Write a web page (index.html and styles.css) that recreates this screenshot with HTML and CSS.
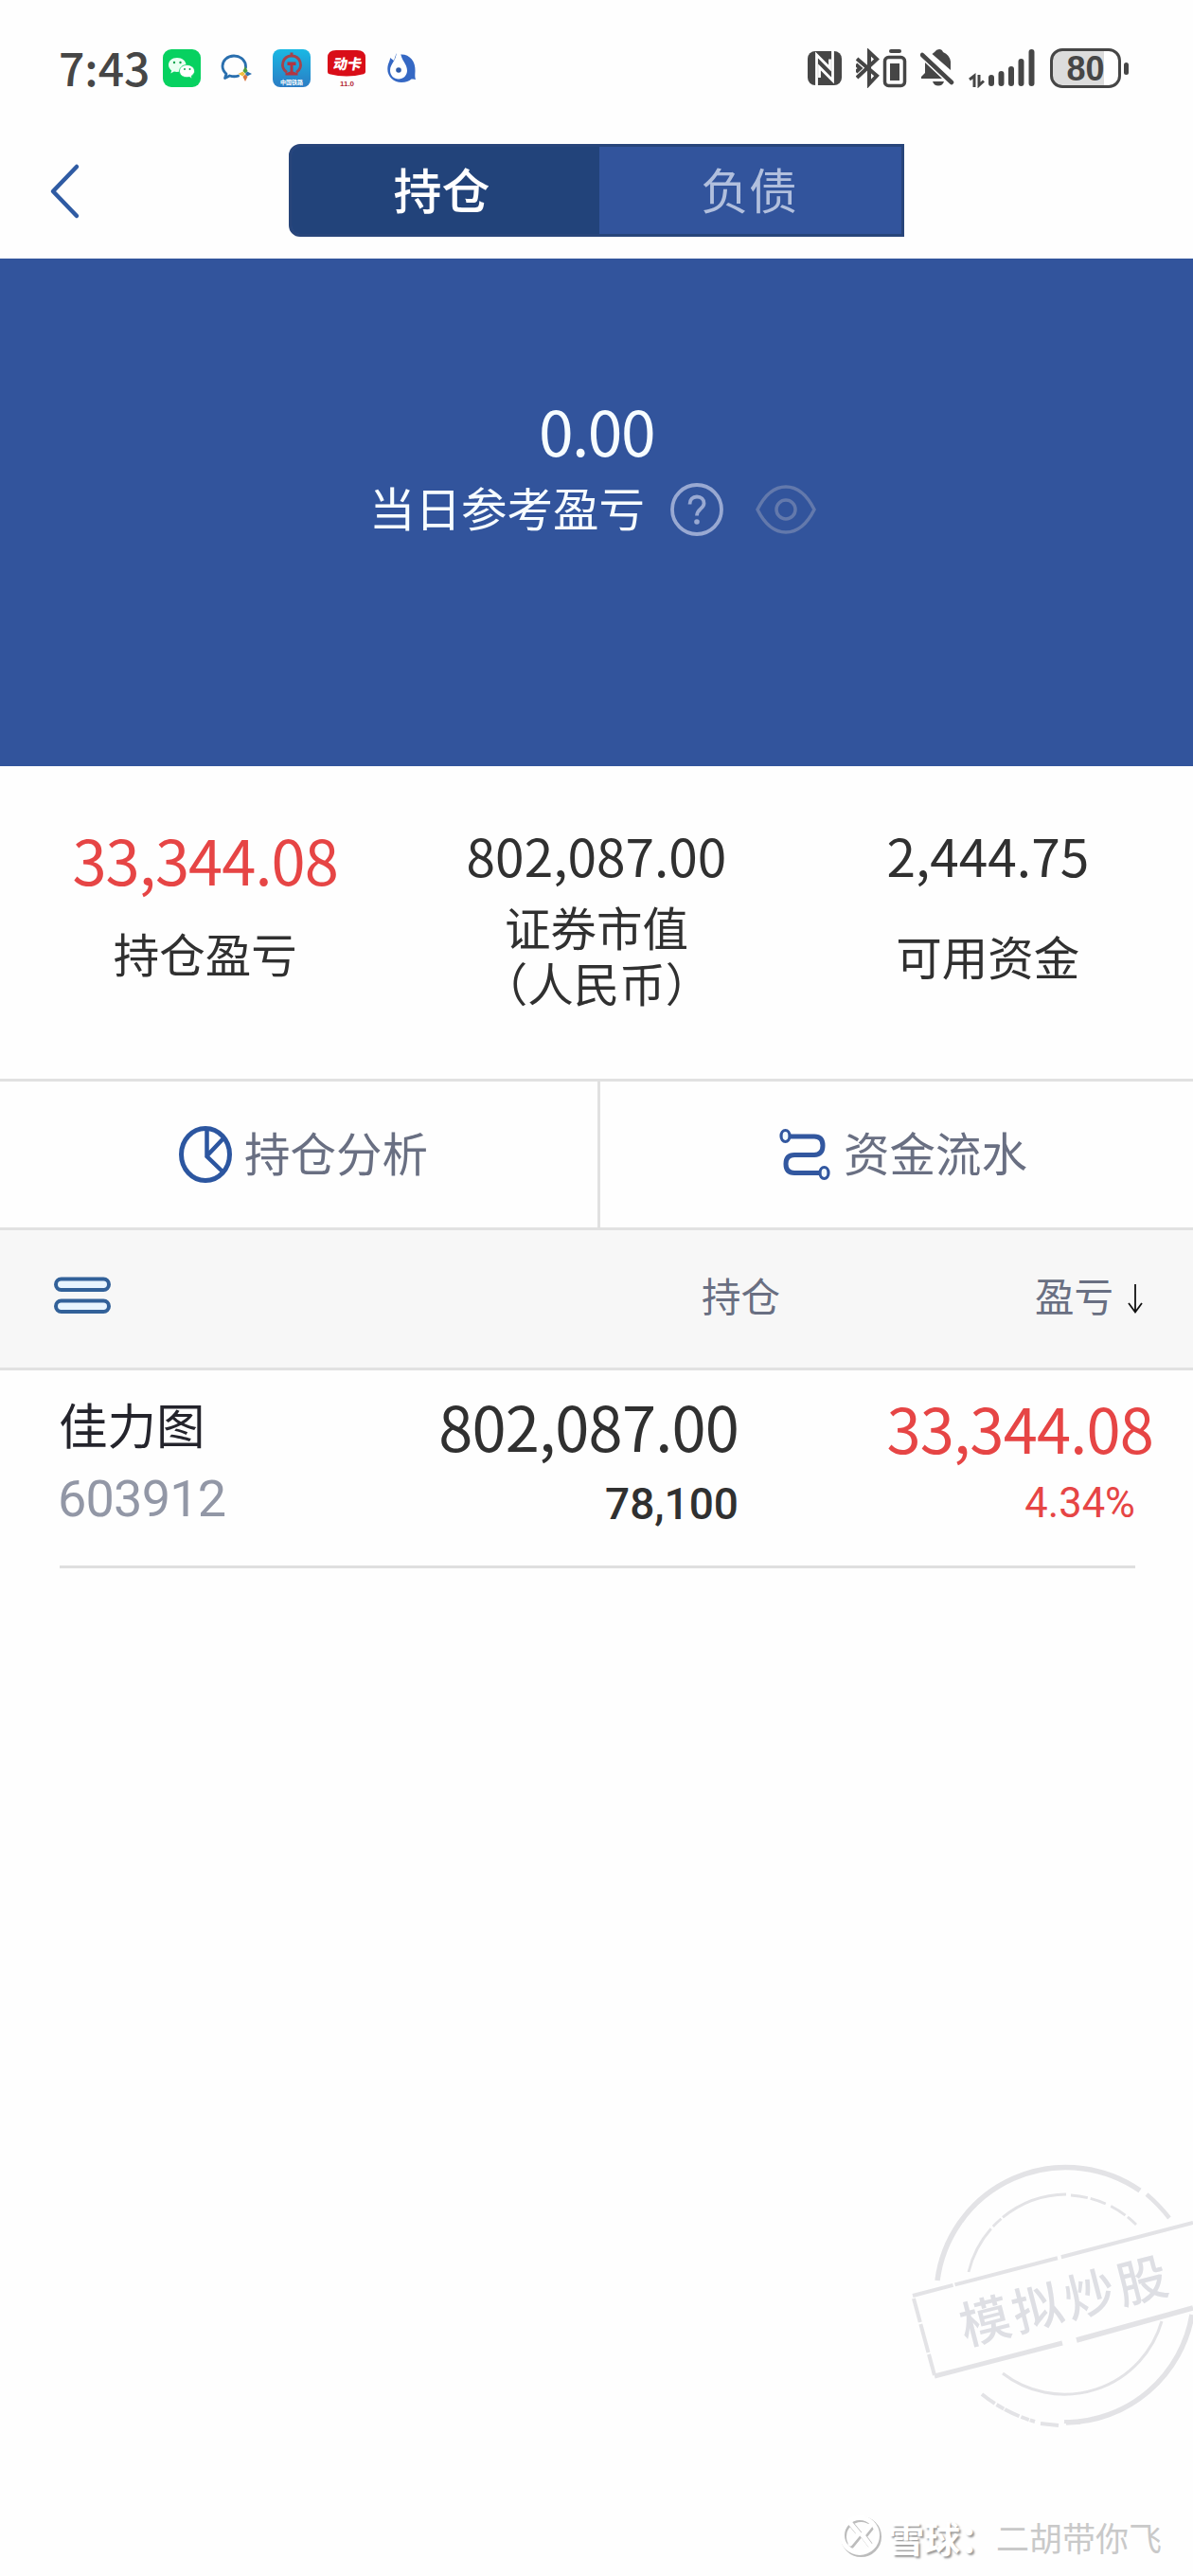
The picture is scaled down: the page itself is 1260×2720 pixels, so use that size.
FILE: index.html
```html
<!DOCTYPE html>
<html lang="zh-CN">
<head>
<meta charset="utf-8">
<title>持仓</title>
<link rel="stylesheet" href="styles.css">
</head>
<body>
<div class="screen">
  <header class="status">
    <div class="status-left">
      <span class="clock">7:43</span>
      <svg class="app" width="40" height="40" viewBox="0 0 40 40">
        <rect width="40" height="40" rx="9" fill="#07d160"/>
        <path d="M15 9C9.500 9 6 12.500 6 16.500c0 2.500 1.200 4.500 3.200 5.900L8.300 25.500l3.600-1.900c5 1.300 12.600-1.100 12.600-7.100C24.500 12.500 20.500 9 15 9z" fill="#eafff2"/>
        <path d="M25.500 16.500c-4.600 0-8 3-8 6.700 0 4.600 5 7.500 10.500 6.200l3 1.600-.8-2.800c2-1.300 3.300-3 3.300-5 0-3.700-3.500-6.700-8-6.700z" fill="#fff" stroke="#07d160" stroke-width=".8"/>
        <g fill="#07a34c"><circle cx="12" cy="14" r="1.200"/><circle cx="18.500" cy="14" r="1.200"/><circle cx="23" cy="21" r="1"/><circle cx="28.500" cy="21" r="1"/></g>
      </svg>
      <svg class="app app-work" width="34" height="32" viewBox="0 0 34 32">
        <path d="M26.500 15.500C27 8 21.500 3 14 3 7 3 2 8 2 13.800c0 3.500 1.500 6 4 8.200L4.600 26.500l5-2.500c3 1 6 1 9 .2" fill="none" stroke="#2a6fae" stroke-width="2.800" stroke-linejoin="round" stroke-linecap="round"/>
        <path d="M26 14l2.600 5-2.600 2.500-2.500-2.500z" fill="#4c9a3b"/><path d="M33 22l-5 2.500-2-2.500 2-2.600z" fill="#2a6fae"/><path d="M26 30l-2.500-5 2.500-2.500 2.500 2.500z" fill="#d9763f"/><path d="M18.500 22l5-2.600 2.300 2.600-2.300 2.500z" fill="#f0c040"/>
      </svg>
      <svg class="app app-rail" width="40" height="40" viewBox="0 0 40 40">
        <defs><linearGradient id="rail" x1="0" y1="0" x2="0" y2="1"><stop offset="0" stop-color="#19b8e4"/><stop offset="1" stop-color="#2b7cc4"/></linearGradient></defs>
        <rect width="40" height="40" rx="8" fill="url(#rail)"/>
        <path d="M15 24.500C7 19 10.500 7 20 7s13 12 5 17.500" fill="none" stroke="#a5434b" stroke-width="2.800"/>
        <path d="M20 3.500v4" stroke="#a5434b" stroke-width="3"/>
        <path d="M15.500 13.500h9v3.500h-3v6.500l5 2v2h-13v-2l5-2V17h-3z" fill="#b23540"/>
        <text x="20" y="36.500" class="rail-text" text-anchor="middle">中国铁路</text>
      </svg>
      <svg class="app app-card" width="40" height="40" viewBox="0 0 40 40">
        <path d="M9 1h22q9 0 9 8v15q0 1.500-2 2.200Q20 31 2 26.200 0 25.700 0 24V9q0-8 9-8z" fill="#d90d18"/>
        <text x="20" y="21" class="card-text" text-anchor="middle" transform="translate(4 0) skewX(-10)">动卡</text>
        <text x="20.500" y="38.500" class="card-num" text-anchor="middle">11.0</text>
      </svg>
      <svg class="app app-drop" width="32" height="34" viewBox="0 0 32 34">
        <path d="M10.500 1.500L8 9 4 6c.3 3-2.700 6-2.700 12C1.300 26 8 32 16 32c5 0 8-1.500 10.500-3.500 2-.3 3.500 0 4.500.5-1-3-.7-5-.5-9C31 10 25 2.500 16 2.500z" fill="#3568c4"/>
        <path d="M10.500 0C11.500 8 4 12 4 19.500c0 5 4 9 9 9s9-4 9-9C22 12 15.500 9 15 0z" fill="#fff"/>
        <circle cx="13" cy="19" r="2.800" fill="#2d5aa8"/>
      </svg>
    </div>
    <div class="status-right">
      <svg width="36" height="36" viewBox="0 0 36 36">
        <rect width="36" height="36" rx="8" fill="#464646"/>
        <path d="M9.500 36V4l14 14V8.500M26.500 0v31L12.500 17v11" fill="none" stroke="#fff" stroke-width="2.800"/>
      </svg>
      <svg class="bt" width="54" height="42" viewBox="0 0 54 42">
        <path d="M1 11l21 18-8 8.500V4l8 7.500L1 31M0 17l4.500 4L0 25" fill="none" stroke="#464646" stroke-width="4"/>
        <rect x="35" y="1" width="13" height="4" rx="2" fill="#464646"/>
        <rect x="30.500" y="9.500" width="21" height="30" rx="4" fill="none" stroke="#464646" stroke-width="3.500"/>
        <rect x="36" y="16" width="10" height="18" fill="#464646"/>
      </svg>
      <svg class="bell" width="36" height="42" viewBox="0 0 36 42">
        <path d="M15 4q2-3 5-3t4 3q7 3 8 10v9L12.500 6zM5 15l18 17H1v-2l4-4z" fill="#464646"/>
        <path d="M2 7l31 29" stroke="#464646" stroke-width="4.500" stroke-linecap="round"/>
        <path d="M13 35h12q-1.500 4.500-6 4.500T13 35z" fill="#464646"/>
      </svg>
      <svg class="signal" width="71" height="42" viewBox="0 0 71 42">
        <path d="M1 33l5-4v12M11 28v11l5-4.500" fill="none" stroke="#464646" stroke-width="3"/>
        <g stroke="#464646" stroke-width="6" stroke-linecap="round"><path d="M24 31v6M34.500 27v10M45 22v15M55.500 14v23M66.500 4v33"/></g>
      </svg>
      <div class="battery"><span>80</span></div><i class="tip"></i>
    </div>
  </header>

  <nav class="nav">
    <svg class="back" width="34" height="60" viewBox="0 0 34 60"><path d="M29 4L4 30l25 26" fill="none" stroke="#2f5ba3" stroke-width="4.500" stroke-linecap="round" stroke-linejoin="round"/></svg>
    <div class="tabs"><div class="tab tab-on">持仓</div><div class="tab">负债</div></div>
  </nav>

  <section class="hero">
    <div class="hero-num">0.00</div>
    <div class="hero-row">
      <span>当日参考盈亏</span>
      <svg class="help" width="58" height="58" viewBox="0 0 58 58"><g fill="none" stroke="#99a9d2" stroke-width="3.800"><circle cx="29" cy="29" r="26"/><path d="M21.500 23.500c0-5 3-8 7.500-8s7.500 3 7.500 7c0 5.500-7.500 6-7.500 13"/></g><circle cx="29" cy="42" r="2.800" fill="#99a9d2"/></svg>
      <svg class="eye" width="64" height="54" viewBox="0 0 64 54"><g fill="none" stroke="#6379ac" stroke-width="3.500"><path d="M2 27Q14 3 32 3t30 24Q50 51 32 51T2 27z"/><circle cx="32" cy="27" r="10"/></g></svg>
    </div>
  </section>

  <section class="stats">
    <div class="stat"><div class="stat-num stat-up">33,344.08</div><div class="stat-label gap-a">持仓盈亏</div></div>
    <div class="stat"><div class="stat-num">802,087.00</div><div class="stat-label gap-b">证券市值<br>（人民币）</div></div>
    <div class="stat"><div class="stat-num">2,444.75</div><div class="stat-label gap-c">可用资金</div></div>
  </section>

  <section class="actions">
    <div class="action action-pie">
      <svg width="58" height="62" viewBox="0 0 58 62"><g fill="none" stroke="#2c56a0" stroke-width="5"><ellipse cx="29" cy="31" rx="25.500" ry="27.500"/><path d="M30.500 4v29L48 50M31 32l17-18" stroke-width="4.500"/></g></svg>
      <span>持仓分析</span>
    </div>
    <div class="action action-flow">
      <svg width="54" height="56" viewBox="0 0 54 56"><g fill="none" stroke="#32579f"><path d="M11 9h26q9 0 9 9.500T37 28.500H16q-9 0-9 9.500t9 9.500h26" stroke-width="5"/><ellipse cx="6.500" cy="8.500" rx="4.500" ry="6" stroke-width="3.200" fill="#f2faff"/><ellipse cx="47.500" cy="47.500" rx="4.500" ry="6" stroke-width="3.200" fill="#f2faff"/></g></svg>
      <span>资金流水</span>
    </div>
  </section>

  <section class="thead">
    <svg width="60" height="40" viewBox="0 0 60 40"><g fill="#e8f5ff" stroke="#326199" stroke-width="4"><rect x="2" y="2.500" width="56" height="11.500" rx="5.700"/><rect x="2" y="25.500" width="56" height="11.500" rx="5.700"/></g></svg>
    <span class="th-hold">持仓</span>
    <span class="th-gain">盈亏</span>
    <svg class="sort" width="18" height="32" viewBox="0 0 18 32"><path d="M9 0v29M2 20l7 9.500 7-9.500" fill="none" stroke="#111" stroke-width="1.800"/></svg>
  </section>

  <section class="row">
    <div class="c-name"><div class="name">佳力图</div><div class="code">603912</div></div>
    <div class="c-hold"><div class="big">802,087.00</div><div class="qty">78,100</div></div>
    <div class="c-gain"><div class="big up">33,344.08</div><div class="pct">4.34%</div></div>
  </section>

  <svg class="stamp" width="320" height="330" viewBox="0 0 320 330">
    <g fill="none" stroke="#e3e3e6">
      <path d="M50 148A137 137 0 0 1 264 53" stroke-width="5.500"/>
      <path d="M271 57q13 11 24 25" stroke-width="4.500"/>
      <path d="M319 184A137 137 0 0 1 186 298" stroke-width="5.500"/>
      <path d="M97 268Q122 288 153 297" stroke-width="4" stroke-dasharray="17 2 9 1"/>
      <path d="M159 299l19 2M184 297l17 1" stroke-width="4"/>
      <path d="M83 139A107 107 0 0 1 186 57" stroke-width="2.800" stroke-dasharray="52 3 12 2 80"/>
      <path d="M191 58A107 107 0 0 1 260 89" stroke-width="2.800" stroke-dasharray="18 3 17 6"/>
      <path d="M119 246A107 107 0 0 0 287 191" stroke-width="3"/>
      <path d="M24 164L320 87" stroke-width="4" stroke-dasharray="44 2 112 4 180"/>
      <path d="M25 167L47 248" stroke-width="4" stroke-dasharray="26 2 31 2"/>
      <path d="M47 249L182 214" stroke-width="5"/>
      <path d="M197 211L320 177" stroke-width="5.500"/>
    </g>
    <text class="stamp-text" x="0" y="0" text-anchor="middle" transform="translate(190 188) rotate(-14.500)">模拟炒股</text>
  </svg>

  <div class="mark">
    <svg width="50" height="50" viewBox="0 0 50 50"><g fill="none" stroke-linecap="round"><g stroke="#bcbcbc" stroke-width="6" transform="translate(1.500 1.500)"><circle cx="24" cy="24" r="18.500"/><path d="M13 10l10 12-9 11M35 14l-8 10 9 12"/></g><g stroke="#fff" stroke-width="5"><circle cx="24" cy="24" r="18.500"/><path d="M13 10l10 12-9 11M35 14l-8 10 9 12"/></g></g></svg>
    <span class="brand">雪球：</span><span class="author">二胡带你飞</span>
  </div>
</div>
</body>
</html>
```
FILE: styles.css
```css
* { box-sizing: border-box; }
body {
  margin: 0;
  background: #fff;
  font-family: "Noto Sans CJK SC", "Noto Sans", sans-serif;
  color: #303030;
}
.screen {
  position: relative;
  width: 1260px;
  height: 2720px;
  overflow: hidden;
  background: #fefefe;
}
svg { display: block; flex: none; }

.status {
  height: 136px;
  padding: 0 68px 0 62px;
  display: flex;
  justify-content: space-between;
}
.status-left, .status-right { display: flex; align-items: center; height: 144px; }
.clock {
  width: 110px;
  font-size: 48px;
  font-weight: 500;
  line-height: 60px;
  padding-bottom: 5px;
  color: #464646;
}
.app-work { margin-left: 21px; }
.app-rail { margin-left: 21px; }
.app-card { margin-left: 18px; }
.app-drop { margin-left: 22px; }
.rail-text { font-size: 6px; font-weight: 700; fill: #fff; }
.card-text { font-size: 15px; font-weight: 900; fill: #fff; }
.card-num { font: 700 8px "Liberation Sans", sans-serif; fill: #b3293c; }
.bt { margin-left: 15px; }
.bell { margin-left: 14px; }
.signal { margin-left: 15px; }
.battery {
  width: 75px;
  height: 42px;
  margin-left: 15px;
  border: 3px solid #464646;
  border-radius: 13px;
  background: linear-gradient(90deg, #dcdcdc 78%, #fff 78%);
  font: 700 36px/38px "Liberation Sans", sans-serif;
  color: #464646;
  text-align: center;
}
.tip { width: 5px; height: 13px; margin-left: 3px; border-radius: 3px; background: #464646; }

.nav { height: 137px; padding: 16px 0 0 52px; display: flex; }
.back { margin-top: 20px; }
.tabs {
  width: 650px;
  height: 98px;
  margin-left: 219px;
  display: flex;
  border: 3px solid #28457a;
  border-radius: 12px 0 0 12px;
  background: #32549c;
  overflow: hidden;
}
.tab { width: 319px; padding-right: 3px; font-size: 51px; line-height: 89px; text-align: center; color: #b1bfdd; }
.tab-on { width: 325px; padding-right: 8px; background: #22437a; color: #fff; font-weight: 500; }

.hero { height: 536px; padding-top: 145px; background: #32549c; color: #f6fcff; }
.hero-num { font-size: 66px; line-height: 70px; letter-spacing: -1.500px; text-align: center; }
.hero-row { display: flex; align-items: center; height: 70px; margin-top: 15px; padding-left: 390px; font-size: 48.500px; line-height: 64px; }
.hero-row span { padding-bottom: 7px; }
.help { margin-left: 26px; }
.eye { margin-left: 33px; }

.stats { height: 330px; padding: 63px 10px 0; display: grid; grid-template-columns: repeat(3, 1fr); text-align: center; }
.stat-num { font-size: 55px; line-height: 60px; }
.stat-up { font-size: 65px; line-height: 70px; letter-spacing: -.9px; color: #e64545; }
.stat-label { font-size: 48.500px; line-height: 59px; }
.gap-a { margin-top: 35px; }
.gap-b { margin-top: 17px; }
.gap-c { margin-top: 48px; }

.actions { height: 160px; display: flex; border-top: 3px solid #e1e1e1; border-bottom: 3px solid #e1e1e1; }
.action { display: flex; align-items: center; height: 154px; font-size: 48.500px; line-height: 60px; color: #696f82; }
.action span { padding-bottom: 7px; }
.action-pie { width: 634px; padding-left: 188px; border-right: 3px solid #e1e1e1; }
.action-pie span { margin-left: 12px; }
.action-flow { padding-left: 189px; }
.action-flow span { margin-left: 14px; }

.thead { height: 148px; padding: 0 52px 0 57px; display: flex; align-items: center; background: #f7f7f7; border-bottom: 3px solid #e1e1e1; font-size: 41.500px; line-height: 52px; color: #696f82; }
.thead > svg:first-child { margin-bottom: 8px; }
.thead span { padding-bottom: 10px; }
.th-hold { margin-left: 624px; }
.th-gain { margin-left: auto; }
.sort { margin-left: 14px; }

.row { height: 209px; margin: 0 61px 0 63px; display: grid; grid-template-columns: 258px 459px 1fr; border-bottom: 3px solid #dfdfdf; }
.name { margin: 24px 0 0 -1px; font-size: 51.500px; line-height: 64px; color: #24242c; }
.code { margin: 18px 0 0 -2px; font: 400 54px/60px Roboto, sans-serif; letter-spacing: -.8px; color: #9297a6; }
.c-hold { text-align: right; }
.big { margin-top: 23px; font-size: 65px; line-height: 70px; letter-spacing: -.8px; white-space: nowrap; }
.up { color: #e64545; margin-right: -19px; margin-top: 25px; }
.qty { margin-top: 22px; font: 500 46px/52px Roboto, sans-serif; }
.c-gain { text-align: right; }
.pct { margin-top: 20px; font: 400 43.500px/52px Roboto, sans-serif; color: #e64545; }

.stamp { position: absolute; left: 940px; top: 2260px; }
.stamp-text { font-size: 53px; font-weight: 500; letter-spacing: 4px; fill: #dedfe4; }

.mark { position: absolute; left: 884px; top: 2648px; height: 60px; display: flex; align-items: center; white-space: nowrap; }
.brand { margin-left: 4px; font-size: 38px; font-weight: 700; color: #fff; text-shadow: 2px 2px 2px #999; }
.author { font-size: 35px; color: #c9c9c9; }
```
